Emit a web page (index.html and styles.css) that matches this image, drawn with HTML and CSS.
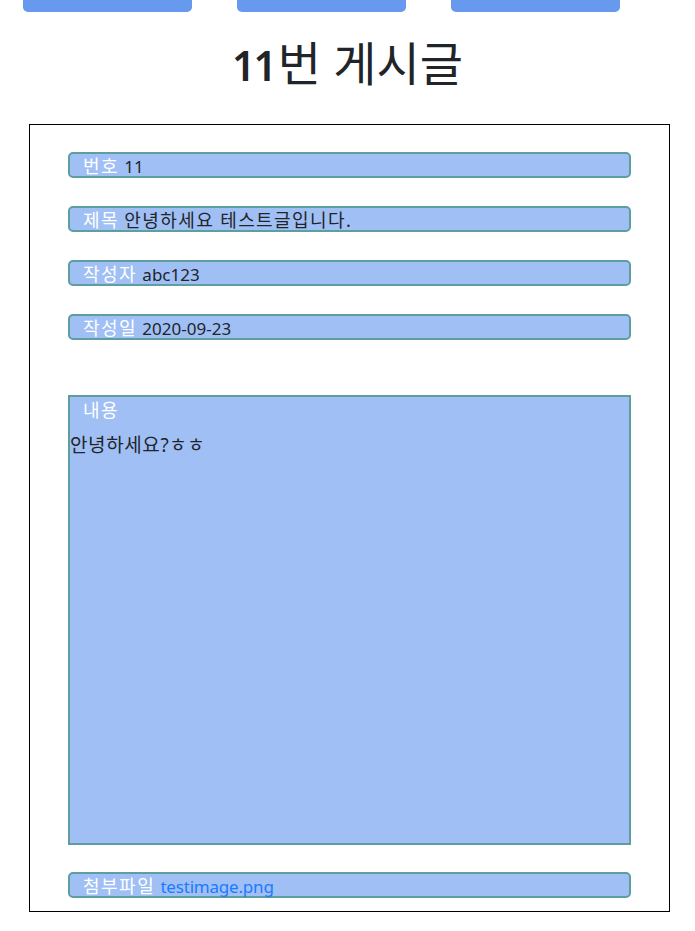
FILE: index.html
```html
<!DOCTYPE html>
<html lang="ko">
<head>
<meta charset="utf-8">
<title>11번 게시글</title>
<link rel="stylesheet" href="styles.css">
</head>
<body>
<nav class="nav">
  <a class="nav-btn" href="#"></a>
  <a class="nav-btn" href="#"></a>
  <a class="nav-btn" href="#"></a>
</nav>
<h1 class="title"><span class="num">11</span><span class="title-ko">번 게시글</span></h1>
<section class="board">
  <div class="field"><span class="label">번호</span> <span class="value en">11</span></div>
  <div class="field"><span class="label">제목</span> <span class="value ko">안녕하세요 테스트글입니다.</span></div>
  <div class="field"><span class="label">작성자</span> <span class="value en">abc123</span></div>
  <div class="field field-gap"><span class="label">작성일</span> <span class="value en">2020-09-23</span></div>
  <div class="content">
    <div class="label content-label">내용</div>
    <div class="content-text">안녕하세요?ㅎㅎ</div>
  </div>
  <div class="field field-last"><span class="label">첨부파일</span> <a class="link" href="#">testimage.png</a></div>
</section>
</body>
</html>
```
FILE: styles.css
```css
* {
  box-sizing: border-box;
}
html, body {
  margin: 0;
  padding: 0;
  background: #fff;
}
body {
  font-family: "Noto Sans", "Noto Sans CJK KR", sans-serif;
  color: #212529;
  font-size: 16px;
}
.nav {
  display: flex;
  gap: 45px;
  padding-left: 23px;
}
.nav-btn {
  display: block;
  width: 169px;
  height: 12px;
  background: #6799ee;
  border-radius: 0 0 5px 5px;
}
.title {
  margin: 27px 0 0;
  text-align: center;
  font-weight: 400;
  line-height: 48px;
  height: 48px;
  color: #212529;
  white-space: nowrap;
}
.title .num {
  font-size: 41px;
  font-weight: 600;
  letter-spacing: -2px;
}
.title .title-ko {
  font-size: 47px;
  margin-left: 3px;
}
.board {
  margin: 37px 0 0 29px;
  width: 641px;
  height: 788px;
  border: 1px solid #000;
  padding: 27px 38px 13px 38px;
  display: flex;
  flex-direction: column;
}
.field {
  height: 26px;
  flex: none;
  border: 2px solid #5f9ea0;
  border-radius: 5px;
  background: #a0bff4;
  padding-left: 13px;
  line-height: 24px;
  white-space: nowrap;
  margin-bottom: 28px;
}
.field-gap {
  margin-bottom: 55px;
}
.field-last {
  margin-bottom: 0;
}
.label {
  color: #fff;
  font-size: 18px;
  letter-spacing: 1.5px;
  margin-right: 1px;
}
.value {
  color: #212529;
}
.en {
  font-size: 17px;
}
.ko {
  font-size: 18px;
  letter-spacing: 1.4px;
}
.link {
  color: #1a7bff;
  font-size: 17px;
  letter-spacing: -0.2px;
  text-decoration: none;
}
.content {
  height: 450px;
  flex: none;
  border: 2px solid #5f9ea0;
  background: #a0bff4;
  margin-bottom: 27px;
}
.content-label {
  padding-left: 13px;
  line-height: 26px;
}
.content-text {
  margin-top: 10px;
  font-size: 19px;
  letter-spacing: 0.6px;
  line-height: 24px;
  color: #212529;
}
```
